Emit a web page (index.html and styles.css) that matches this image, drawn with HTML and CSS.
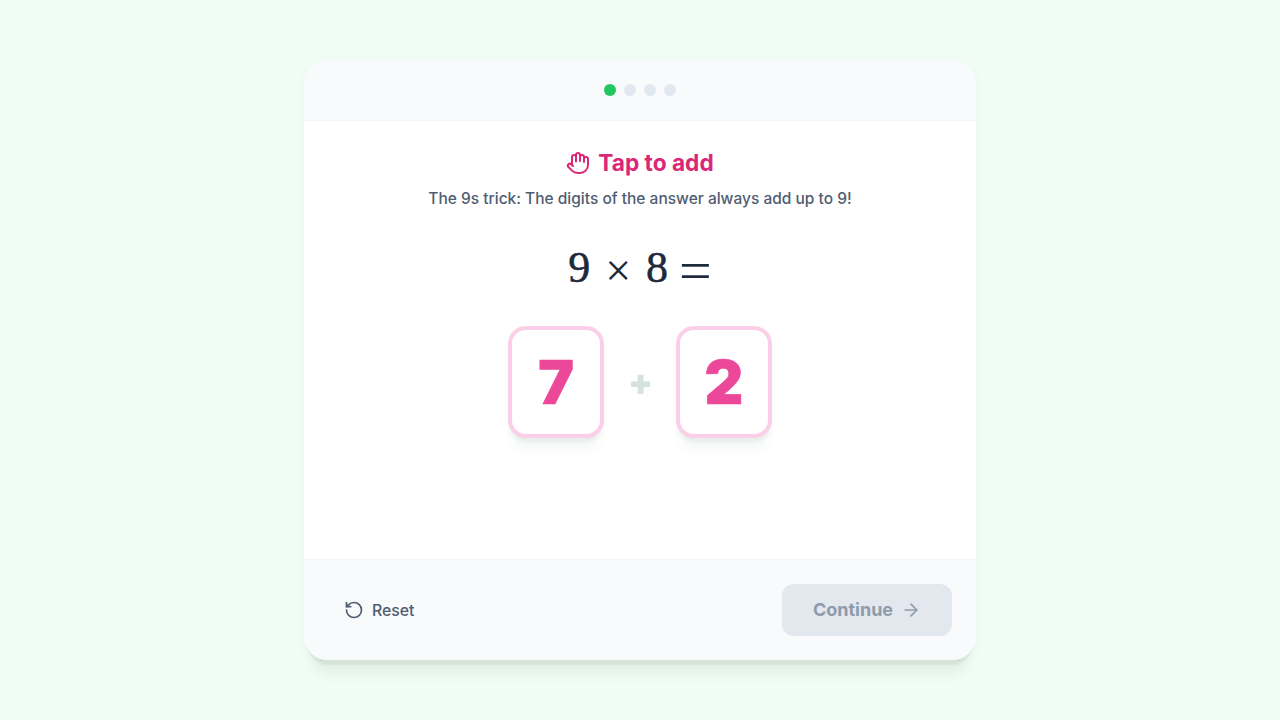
FILE: index.html
```html
<!DOCTYPE html>
<html>
<head>
<meta charset="UTF-8" />
<title>Tap to add</title>
<link rel="stylesheet" href="styles.css">
</head>
<body>

<div class="card">
	<!-- progress -->
	<div class="card-top">
		<span class="dot dot-on"></span>
		<span class="dot"></span>
		<span class="dot"></span>
		<span class="dot"></span>
	</div>

	<!-- content -->
	<div class="card-main">
		<h1 class="title">
			<svg class="icon-hand" viewBox="0 0 24 24" fill="none" stroke="currentColor" stroke-width="2" stroke-linecap="round" stroke-linejoin="round">
				<path d="M18 11V6a2 2 0 0 0-2-2a2 2 0 0 0-2 2" />
				<path d="M14 10V4a2 2 0 0 0-2-2a2 2 0 0 0-2 2v2" />
				<path d="M10 10.5V6a2 2 0 0 0-2-2a2 2 0 0 0-2 2v8" />
				<path d="M18 8a2 2 0 1 1 4 0v6a8 8 0 0 1-8 8h-2c-2.8 0-4.5-.86-5.99-2.34l-3.6-3.6a2 2 0 0 1 2.83-2.82L7 15" />
			</svg>
			Tap to add
		</h1>
		<p class="hint">The 9s trick: The digits of the answer always add up to 9!</p>
		<div class="sum">
			<span class="num">9</span><span class="op">×</span><span class="num">8</span><span class="op op-equals">=</span>
		</div>
		<div class="tiles">
			<div class="tile">7</div>
			<span class="plus">+</span>
			<div class="tile">2</div>
		</div>
	</div>

	<!-- footer -->
	<div class="card-bottom">
		<button class="btn-reset">
			<svg class="icon-reset" viewBox="0 0 24 24" fill="none" stroke="currentColor" stroke-width="2" stroke-linecap="round" stroke-linejoin="round">
				<path d="M3 12a9 9 0 1 0 9-9 9.75 9.75 0 0 0-6.74 2.74L3 8" />
				<path d="M3 3v5h5" />
			</svg>
			Reset
		</button>
		<button class="btn-continue">
			Continue
			<svg class="icon-arrow" viewBox="0 0 24 24" fill="none" stroke="currentColor" stroke-width="2" stroke-linecap="round" stroke-linejoin="round">
				<path d="M5 12h14" />
				<path d="M12 5l7 7-7 7" />
			</svg>
		</button>
	</div>
</div>

</body>
</html>
```

FILE: styles.css
```css
* {
	box-sizing: border-box;
	margin: 0;
	padding: 0;
}

body {
	width: 100%;
	height: 720px;
	display: flex;
	align-items: center;
	justify-content: center;
	background: #f0fdf4;
	font-family: Inter, sans-serif;
	overflow: hidden;
}

.card {
	width: 672px;
	height: 600px;
	display: flex;
	flex-direction: column;
	background: #fff;
	border-radius: 24px;
	overflow: hidden;
	box-shadow: 0 8px 2px -3px rgba(50, 60, 55, 0.07), 0 24px 10px -8px rgba(30, 90, 60, 0.05), 0 4px 12px rgba(30, 90, 60, 0.03);
}

/* progress */
.card-top {
	height: 61px;
	display: flex;
	align-items: center;
	justify-content: center;
	gap: 8px;
	background: #f8fafc;
	border-bottom: 1px solid #f1f5f9;
}

.dot {
	width: 12px;
	height: 12px;
	border-radius: 50%;
	background: #e2e8f0;
}

.dot-on {
	background: #22c55e;
}

/* content */
.card-main {
	flex: 1;
	display: flex;
	flex-direction: column;
	align-items: center;
	padding-top: 24px;
}

.title {
	display: flex;
	align-items: center;
	gap: 8px;
	font-size: 22.7px;
	line-height: 36px;
	font-weight: 700;
	color: #db2777;
}

.icon-hand {
	width: 24px;
	height: 24px;
}

.hint {
	margin-top: 6px;
	font-size: 15.5px;
	line-height: 24px;
	font-weight: 500;
	color: #4f5d72;
}

.sum {
	margin-top: 29px;
	height: 56px;
	display: flex;
	align-items: center;
	gap: 15px;
	font-family: "Liberation Serif", serif;
	font-size: 44px;
	line-height: 56px;
	color: #1e293b;
	-webkit-text-stroke: 0.5px #1e293b;
}

.num {
	width: 22px;
	text-align: center;
}

.op {
	margin-top: 5px;
	font-size: 46px;
	-webkit-text-stroke: 0;
}

.op-equals {
	margin-left: -4px;
	font-size: 58px;
}

.tiles {
	margin-top: 30px;
	display: flex;
	align-items: center;
	gap: 24px;
}

.tile {
	width: 96px;
	height: 112px;
	display: flex;
	align-items: center;
	justify-content: center;
	background: #fff;
	border: 4px solid #fbcfe8;
	border-radius: 18px;
	font-size: 60px;
	font-weight: 900;
	color: #ec4899;
	-webkit-text-stroke: 0.6px #ec4899;
	box-shadow: 0 6px 3px -2px rgba(30, 90, 60, 0.05), 0 16px 10px -4px rgba(30, 90, 60, 0.035), 0 2px 10px rgba(30, 90, 60, 0.03);
}

.plus {
	width: 24px;
	text-align: center;
	font-size: 36px;
	font-weight: 900;
	color: #d5e3dc;
}

/* footer */
.card-bottom {
	height: 101px;
	display: flex;
	align-items: center;
	justify-content: space-between;
	padding: 0 24px;
	background: #f8fafc;
	border-top: 1px solid #f1f5f9;
}

.btn-reset {
	display: flex;
	align-items: center;
	gap: 8px;
	padding: 0 16px;
	border: 0;
	background: none;
	font-family: Inter, sans-serif;
	font-size: 15.8px;
	font-weight: 500;
	color: #4f5d72;
}

.icon-reset {
	width: 20px;
	height: 20px;
}

.btn-continue {
	width: 170px;
	height: 52px;
	display: flex;
	align-items: center;
	justify-content: center;
	gap: 8px;
	padding-bottom: 1px;
	border: 0;
	border-radius: 12px;
	background: #e2e8ee;
	font-family: Inter, sans-serif;
	font-size: 18px;
	font-weight: 700;
	color: #8f9bab;
}

.icon-arrow {
	width: 20px;
	height: 20px;
}
```
